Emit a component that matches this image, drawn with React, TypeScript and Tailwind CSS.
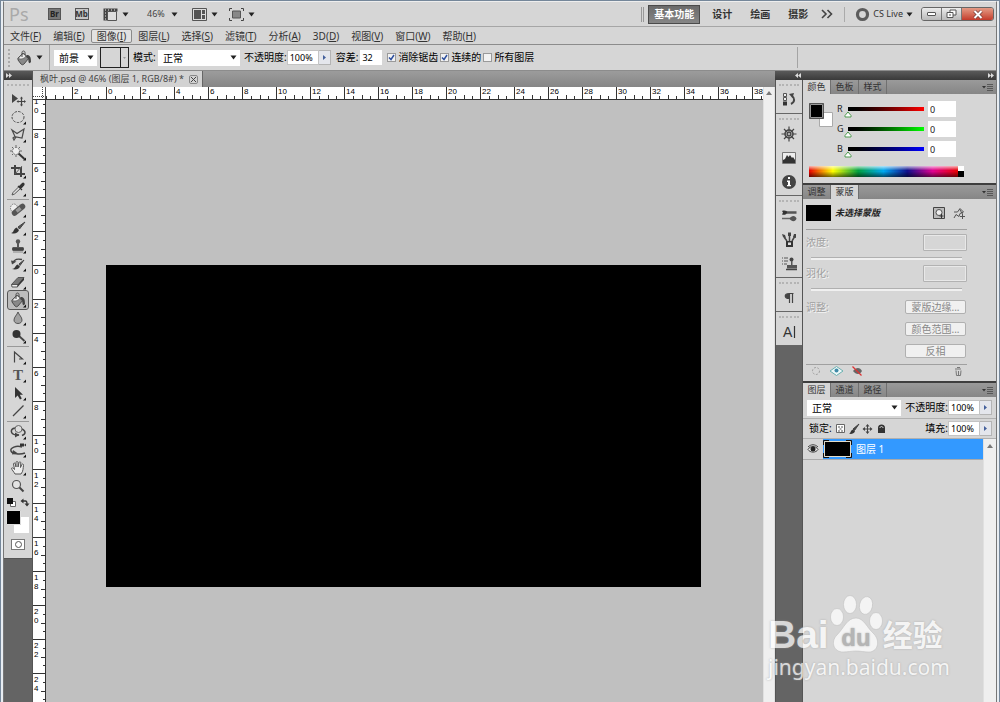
import { useState } from "react";
import type { ReactNode } from "react";

const INK = "#4a4a4a";

function Caret() {
  return (
    <svg width="7" height="5" viewBox="0 0 7 5" className="shrink-0">
      <path d="M0.5 0.5h6L3.5 4.5z" fill="#222" />
    </svg>
  );
}

function Grip() {
  return <div className="mx-[3px] mt-[4px] mb-[3px] h-[2px] shrink-0 border-t-2 border-dotted border-[#b4b4b4]" />;
}

/* ---------- application bar ---------- */

function AppIcon({ children, label }: { children: ReactNode; label: string }) {
  return (
    <button aria-label={label} className="flex items-center gap-[4px]">
      <svg width="15" height="13" viewBox="0 0 15 13">
        {children}
      </svg>
      <Caret />
    </button>
  );
}

const WORKSPACES = ["设计", "绘画", "摄影"];

function AppBar() {
  return (
    <header className="flex h-[25px] shrink-0 items-center border-b border-[#a6a6a6] pl-[5px]">
      <span className="w-[39px] text-[18px] leading-[20px] text-[#a9a9a9]">Ps</span>
      <button className="mr-[14px] h-[12px] w-[13px] border border-[#555] bg-[#777] text-center text-[8px] leading-[10px] font-bold text-[#222]">
        Br
      </button>
      <button className="mr-[14px] h-[12px] w-[14px] border border-[#555] bg-[#c4c4c4] text-center text-[8px] leading-[10px] font-bold text-[#333]">
        <span className="-ml-px">Mb</span>
      </button>
      <AppIcon label="查看额外内容">
        <path d="M0.5 0.5h14v3h-10v9h-4z" fill="#444" />
        <path d="M4.5 3.5h9v9h-9z" fill="#ddd" stroke="#555" />
        <path d="M2 2h1M5 2h1M8 2h1M11 2h1M2 5h1M2 8h1M2 11h1" stroke="#eee" />
      </AppIcon>
      <button className="ml-[18px] flex w-[31px] items-center justify-between text-[9px] text-[#444]">
        46% <Caret />
      </button>
      <div className="ml-[14px] flex gap-[11px]">
        <AppIcon label="排列文档">
          <path d="M0.5 0.5h14v12h-14z" fill="#ddd" stroke="#555" />
          <path d="M2 2h7v9H2zM10 2h3v4h-3zM10 7h3v4h-3z" fill="#555" />
        </AppIcon>
        <AppIcon label="屏幕模式">
          <path d="M3.500 3h8v7h-8z" fill="#888" stroke="#555" />
          <path d="M0.5 3V0.5H3M12 0.5h2.5V3M14.5 10v2.5H12M3 12.5H0.5V10" fill="none" stroke="#444" />
        </AppIcon>
      </div>
      <div className="flex-1" />
      <div className="mr-[4px] h-[15px] w-[3px] border-x border-[#999]" />
      <button className="h-[19px] w-[52px] border border-[#4a4a4a] bg-linear-to-b from-[#6a6a6a] to-[#868686] text-center text-[10px] leading-[17px] font-bold text-white">
        基本功能
      </button>
      <nav className="ml-[12px] flex gap-[18px]">
        {WORKSPACES.map((w) => (
          <button key={w} className="text-[10px] font-bold text-[#333]">
            {w}
          </button>
        ))}
      </nav>
      <button aria-label="更多工作区" className="ml-[13px]">
        <svg width="12" height="10" viewBox="0 0 12 10">
          <path d="M1 1l4 4-4 4M6.500 1l4 4-4 4" fill="none" stroke="#444" strokeWidth="1.600" />
        </svg>
      </button>
      <div className="ml-[11px] h-[15px] w-px bg-[#aaa]" />
      <button className="ml-[10px] flex items-center gap-[3px] text-[9px] text-[#333]">
        <svg width="15" height="15" viewBox="0 0 15 15">
          <circle cx="7.500" cy="7.500" r="5" fill="none" stroke="#5c5c5c" strokeWidth="3.200" />
        </svg>
        <span>CS Live</span>
        <Caret />
      </button>
      <div className="mr-[2px] ml-[8px] flex h-[14px] w-[73px] overflow-hidden rounded-[3px] border border-[#666] bg-[#d4d4d4]">
        <button aria-label="最小化" className="flex w-[20px] items-center justify-center border-r border-[#777] bg-linear-to-b from-[#ececec] to-[#b9b9b9]">
          <span className="h-[4px] w-[9px] rounded-[1px] border border-[#555] bg-white" />
        </button>
        <button aria-label="还原" className="flex w-[20px] items-center justify-center border-r border-[#777] bg-linear-to-b from-[#ececec] to-[#b9b9b9]">
          <svg width="11" height="10" viewBox="0 0 11 10">
            <path d="M4 1h6v5H4z" fill="#fff" stroke="#555" />
            <path d="M1 3.500h6v5H1z" fill="#fff" stroke="#555" />
            <path d="M3 5.500h2v1H3z" fill="#555" />
          </svg>
        </button>
        <button aria-label="关闭" className="flex flex-1 items-center justify-center bg-linear-to-b from-[#e39a85] to-[#c3392a]">
          <svg width="10" height="9" viewBox="0 0 10 9">
            <path d="M1.500 1l7 7M8.500 1l-7 7" stroke="#6d3a34" strokeWidth="3.400" />
            <path d="M1.500 1l7 7M8.500 1l-7 7" stroke="#fff" strokeWidth="2" />
          </svg>
        </button>
      </div>
    </header>
  );
}

const MENUS = [
  ["文件", "F"],
  ["编辑", "E"],
  ["图像", "I"],
  ["图层", "L"],
  ["选择", "S"],
  ["滤镜", "T"],
  ["分析", "A"],
  ["3D", "D"],
  ["视图", "V"],
  ["窗口", "W"],
  ["帮助", "H"],
];

function MenuBar() {
  return (
    <nav className="flex h-[18px] shrink-0 items-center border-b border-[#8c8c8c]">
      {MENUS.map(([name, key]) => (
        <button
          key={name}
          className={`h-[14px] rounded-[2px] border px-[5px] text-[10px] leading-[12px] text-[#333] ${
            name === "图像" ? "border-[#8a8a8a] bg-[#e2e2e2]" : "border-transparent"
          }`}
        >
          {name}(<u>{key}</u>)
        </button>
      ))}
    </nav>
  );
}

/* ---------- options bar ---------- */

function Select({ value, label, className }: { value: string; label: string; className: string }) {
  return (
    <div className={`relative ${className}`}>
      <select
        aria-label={label}
        className="block h-full w-full appearance-none bg-white pl-[5px] text-[10px] leading-[16px] text-black outline-none"
      >
        <option>{value}</option>
      </select>
      <div className="pointer-events-none absolute inset-y-0 right-[3px] flex items-center">
        <Caret />
      </div>
    </div>
  );
}

function Percent({ label, id }: { label: string; id: string }) {
  return (
    <div className="flex items-center">
      <label htmlFor={id} className="text-[10px] text-black">
        {label}
      </label>
      <input id={id} defaultValue="100%" className="h-[15px] w-[32px] border border-[#c4c4c4] bg-white pl-[2px] text-[9px] text-black" />
      <button aria-label={`${label}滑块`} className="flex h-[15px] w-[12px] items-center justify-center border border-l-0 border-[#b4b4b4] bg-[#e4e6ec]">
        <svg width="3" height="5" viewBox="0 0 3 5">
          <path d="M0 0l3 2.500L0 5z" fill="#44609c" />
        </svg>
      </button>
    </div>
  );
}

function Check({ label, initial }: { label: string; initial: boolean }) {
  const [on, setOn] = useState(initial);
  return (
    <label className="flex items-center gap-[2px] text-[10px] text-black">
      <span className="grid">
        <input
          type="checkbox"
          checked={on}
          onChange={() => setOn(!on)}
          className="col-start-1 row-start-1 h-[9px] w-[9px] appearance-none border border-[#9a9a9a] bg-[#f2f2f2]"
        />
        {on && (
          <svg width="9" height="9" viewBox="0 0 9 9" className="pointer-events-none col-start-1 row-start-1">
            <path d="M2 4.500l2 2L7 2" fill="none" stroke="#2d4f9e" strokeWidth="1.500" />
          </svg>
        )}
      </span>
      {label}
    </label>
  );
}

function BucketShape() {
  return (
    <>
      <path d="M4 9l5-5 6 5-5 6c-1 1-2 1-3 0L4 11z" fill="#888" stroke={INK} />
      <path d="M4 9.500l5-5 3 2.500c-2 3-5 3.500-8 2.500z" fill="#eee" stroke={INK} strokeWidth="0.600" />
      <path d="M8 8V3.500c0-2 3-2 3 0V6" fill="none" stroke={INK} />
      <path d="M13 6c3 0 4 2 4 7-1 1.500-2 1.500-2.500 0 0-2 0-4-2.500-5z" fill="#444" />
    </>
  );
}

function OptionsBar() {
  return (
    <div className="flex h-[26px] shrink-0 items-center border-b border-[#8c8c8c] pl-[4px]">
      <div className="h-[18px] w-[3px] border-l-2 border-dotted border-[#aaa]" />
      <button aria-label="油漆桶" className="ml-[3px] flex h-full w-[36px] items-center justify-between border-r border-[#a4a4a4] pr-[6px]">
        <svg width="20" height="18" viewBox="0 0 20 18">
          <BucketShape />
        </svg>
        <Caret />
      </button>
      <Select label="填充源" value="前景" className="ml-[4px] h-[16px] w-[43px]" />
      <button aria-label="图案" className="ml-[3px] flex h-[21px] w-[29px] border border-[#222]">
        <span className="h-full w-[20px] border-r border-[#222]" />
        <span className="flex h-full flex-1 items-center justify-center">
          <svg width="3" height="2" viewBox="0 0 3 2">
            <path d="M0 0h3L1.500 2z" fill="#999" />
          </svg>
        </span>
      </button>
      <span className="ml-[4px] w-[25px] text-[10px] text-black">模式:</span>
      <Select label="模式" value="正常" className="mr-[4px] h-[16px] w-[82px]" />
      <Percent label="不透明度:" id="tool-opacity" />
      <label htmlFor="tolerance" className="mr-[2px] ml-[5px] text-[10px] text-black">
        容差:
      </label>
      <input id="tolerance" defaultValue="32" className="mr-[5px] h-[15px] w-[22px] bg-white pl-[2px] text-[9px] text-black" />
      <div className="flex gap-[2px]">
        <Check label="消除锯齿" initial />
        <Check label="连续的" initial />
        <Check label="所有图层" initial={false} />
      </div>
      <div className="mr-[198px] ml-auto h-[21px] w-px bg-[#a4a4a4]" />
    </div>
  );
}

/* ---------- toolbox ---------- */

type Tool = { name: string; icon: ReactNode; plain?: boolean };

const TOOL_GROUPS: Tool[][] = [
  [
    {
      name: "移动",
      plain: true,
      icon: (
        <>
          <path d="M4 4v9l6-4.500z" fill="#444" />
          <path d="M13.500 8v7M10 11.500h7" stroke="#444" strokeWidth="1.200" />
          <path d="M13.500 6.500l1.500 2h-3zM13.500 16.500l1.500-2h-3zM8.500 11.500l2-1.500v3zM18 11.500l-2-1.500v3z" fill="#444" />
        </>
      ),
    },
    { name: "椭圆选框", icon: <ellipse cx="10" cy="9" rx="6" ry="5.500" fill="none" stroke={INK} strokeDasharray="2.500 1.300" /> },
    { name: "多边形套索", icon: <path d="M4 4l5 3.500L16 3l-2 9-6-1-2 3-1-2 2-1.500z" fill="none" stroke={INK} strokeWidth="1.200" /> },
    {
      name: "魔棒",
      icon: (
        <>
          <circle cx="8" cy="7" r="3.500" fill="#eee" stroke="#666" strokeDasharray="2 1" />
          <path d="M8 1v2M8 11v2M2 7h2M12 7h2M4 3l1 1M4 11l1-1M11 4l1-1" stroke="#666" />
          <path d="M10.500 9.500l6 5.500" stroke="#333" strokeWidth="2" />
        </>
      ),
    },
    {
      name: "裁剪",
      icon: (
        <>
          <path d="M7 3v9h10M3 6h10v9" fill="none" stroke="#444" strokeWidth="2" />
          <path d="M7.500 11.500L14 4" stroke="#666" />
        </>
      ),
    },
    {
      name: "吸管",
      icon: (
        <>
          <path d="M4 15l1-2.500 6-6L13 8l-6.500 6z" fill="#ddd" stroke="#555" />
          <path d="M10 6l4 4M11.500 6.500l3-3c.7-.7 2 .3 1.300 1.300L13 8z" fill="#333" stroke="#333" strokeWidth="1.300" />
        </>
      ),
    },
  ],
  [
    {
      name: "污点修复",
      icon: (
        <>
          <ellipse cx="6" cy="7" rx="3.500" ry="4" fill="#eee" stroke="#777" strokeDasharray="1.500 1" />
          <path d="M6.500 12L14.500 5.500" stroke="#555" strokeWidth="5.500" strokeLinecap="round" />
          <path d="M8.500 10.300l4-3.200" stroke="#999" strokeWidth="3.500" />
        </>
      ),
    },
    {
      name: "画笔",
      icon: (
        <>
          <path d="M17 3l-7 5 1.500 2z" fill="#555" stroke="#444" />
          <path d="M3 14c3 0 2-4 5.500-5.500L11 11c-1 3-4 4.500-8 3z" fill="#333" />
        </>
      ),
    },
    {
      name: "仿制图章",
      icon: (
        <>
          <circle cx="10" cy="4.500" r="2.200" fill="#555" />
          <path d="M9 6h2v4h4.500v4h-11v-4H9z" fill="#555" />
          <path d="M4 12h12" stroke="#3c3c3c" strokeWidth="1.500" />
          <path d="M5 15h10" stroke="#888" />
        </>
      ),
    },
    {
      name: "历史记录画笔",
      icon: (
        <>
          <path d="M16 5l-5 4 1 1.500z" fill="#555" stroke="#444" />
          <path d="M4 14c3 0 3-3 5.500-4.500L12 11.500c-1 2.500-4 3.500-8 2.500z" fill="#333" />
          <path d="M5 8c1-4 5-4.500 9-3.500" fill="none" stroke="#444" strokeWidth="1.300" />
          <path d="M3 5.500l5.500 1L4 9.500z" fill="#444" />
        </>
      ),
    },
    {
      name: "橡皮擦",
      icon: (
        <>
          <path d="M3.500 11.500L10 4.500h6l-6 7z" fill="#777" stroke="#555" />
          <path d="M3.500 11.500H10L9.500 14H4z" fill="#eee" stroke="#555" />
          <path d="M10 11.500l6-7v2.500L9.500 14z" fill="#333" />
        </>
      ),
    },
    { name: "油漆桶", icon: <BucketShape /> },
    { name: "模糊", icon: <path d="M10 3c1 3 4 5 4 8 0 2-1.500 3.500-4 3.500S6 13 6 11c0-3 3-5 4-8z" fill="#a2a2a2" stroke="#555" /> },
    {
      name: "减淡",
      icon: (
        <>
          <path d="M11 9l5.500 5" stroke="#444" strokeWidth="1.800" />
          <circle cx="8.500" cy="7" r="4" fill="#333" />
        </>
      ),
    },
  ],
  [
    { name: "钢笔", icon: <path d="M6.500 14.500V4l8 7H11" fill="none" stroke="#444" strokeWidth="1.200" /> },
    {
      name: "文字",
      icon: (
        <text x="10" y="14" textAnchor="middle" fontSize="15" fontFamily="Liberation Serif, serif" fontWeight="bold" fill="#555">
          T
        </text>
      ),
    },
    { name: "路径选择", icon: <path d="M7 3v11l2.700-2.600L12 15.500l1.800-1-2-3.800H15z" fill="#333" /> },
    { name: "直线", icon: <path d="M5 14L15.500 3.500" stroke="#444" strokeWidth="1.200" /> },
  ],
  [
    {
      name: "3D旋转",
      icon: (
        <>
          <path d="M7 5C2 6 2 11 8 12h3M14 6c4 2 4 5 0 6.500" fill="none" stroke="#444" strokeWidth="1.500" />
          <circle cx="10.500" cy="6" r="3.500" fill="#ddd" stroke="#666" />
          <path d="M7 9.500l4.500 2.500L7 14.500z" fill="#444" />
        </>
      ),
    },
    {
      name: "3D环绕",
      icon: (
        <>
          <path d="M12 2.500h4v3h-4zM16 4l2-1.500v3z" fill="#333" />
          <path d="M14 6C8 4 2 7 3 10s9 4 14 2" fill="none" stroke="#444" strokeWidth="1.500" />
          <path d="M5 9l5 3.500-6 1z" fill="#444" />
        </>
      ),
    },
    {
      name: "抓手",
      icon: (
        <path
          d="M7 15C6 13 4 11 3.500 9.500c0-1 1.500-1 3 1L5.500 5c0-1.300 1.500-1.300 1.800 0L8 8V3.500c0-1.300 2-1.300 2 0V8l1-4.500c.3-1 1.800-1 1.800.3L12.500 8.500l1.300-3c.6-1 2-.5 1.700.8C15 9 15.500 12 13 15z"
          fill="#eee"
          stroke="#555"
        />
      ),
    },
    {
      name: "缩放",
      plain: true,
      icon: (
        <>
          <circle cx="8.500" cy="7.500" r="4" fill="#e4e4e4" stroke="#555" strokeWidth="1.200" />
          <path d="M11.500 10.500l4 4" stroke="#444" strokeWidth="2" />
        </>
      ),
    },
  ],
];

function Toolbox() {
  const [active, setActive] = useState("油漆桶");
  return (
    <aside className="flex w-[29px] shrink-0 flex-col border-r border-[#555] bg-[#646464]">
      <DarkBar>
        <Chevrons />
      </DarkBar>
      <div className="flex flex-col items-center border-b border-[#555] bg-[#d6d6d6] pb-[8px]">
        <div className="w-full pb-px">
          <Grip />
        </div>
        {TOOL_GROUPS.map((group, i) => (
          <div key={i} className={`flex w-[22px] flex-col items-center ${i > 0 ? "mt-px border-t border-[#999] pt-px" : ""}`}>
            {group.map((tool) => (
              <button
                key={tool.name}
                aria-label={tool.name}
                onClick={() => setActive(tool.name)}
                className={`h-[18px] w-[20px] ${active === tool.name ? "rounded-[2px] bg-[#bcbcbc] outline outline-[#555]" : ""}`}
              >
                <svg width="20" height="18" viewBox="0 0 20 18">
                  {tool.icon}
                  {!tool.plain && <path d="M18 13.500v3h-3z" fill="#111" />}
                </svg>
              </button>
            ))}
          </div>
        ))}
        <svg width="24" height="40" viewBox="0 0 24 40">
          <path d="M4.500 6.500h5v5h-5z" fill="#fff" stroke="#666" />
          <path d="M1 3h6v6H1z" fill="#111" />
          <path d="M16 6h3.500c1.500 0 1.500 1 1.500 3" fill="none" stroke="#333" strokeWidth="1.300" />
          <path d="M17.500 3.500v5l-3-2.500zM18.500 8.500h5l-2.500 3z" fill="#333" />
          <path d="M8 22h15v16H8z" fill="#fff" />
          <path d="M0.500 15.500h14v14h-14z" fill="#000" stroke="#ddd" />
        </svg>
        <button aria-label="快速蒙版" className="mt-[4px] flex h-[11px] w-[14px] items-center justify-center border border-[#777] bg-white">
          <span className="h-[7px] w-[7px] rounded-full border border-[#555]" />
        </button>
      </div>
    </aside>
  );
}

/* ---------- document window ---------- */

const H_MARKS = Array.from({ length: 21 }, (_, i) => Math.abs(i * 2 - 2));
const V_MARKS = Array.from({ length: 17 }, (_, i) => Math.abs(i * 2 - 8));

function HTicks() {
  return (
    <svg width="34" height="4" viewBox="0 0 34 4" className="-mt-px shrink-0">
      <path d="M8.500 1v3M17.500 0v4M25.500 1v3" stroke="#333" />
    </svg>
  );
}

function VTicks() {
  return (
    <svg width="4" height="34" viewBox="0 0 4 34" className="shrink-0">
      <path d="M2 8.500h2M0 17.500h4M2 25.500h2" stroke="#333" />
    </svg>
  );
}

function VCell({ mark }: { mark: number }) {
  return (
    <div className="flex h-[34px] w-full shrink-0 justify-between border-t border-[#333]">
      <div className="pt-px pl-px text-[8px] leading-[9px] text-black">
        {String(mark)
          .split("")
          .map((d, i) => (
            <div key={i}>{d}</div>
          ))}
      </div>
      <VTicks />
    </div>
  );
}

function Document() {
  return (
    <main className="flex min-w-0 flex-1 flex-col">
      <div className="flex h-[16px] shrink-0 bg-linear-to-b from-[#9c9c9c] to-[#868686]">
        <div className="flex items-center gap-[5px] border-r border-[#666] bg-[#d2d2d2] pr-[4px] pl-[7px] text-[9px] text-[#444]">
          <span className="whitespace-nowrap">枫叶.psd @ 46% (图层 1, RGB/8#) *</span>
          <button aria-label="关闭文档" className="flex h-[9px] w-[9px] items-center justify-center rounded-[2px] border border-[#888]">
            <svg width="5" height="5" viewBox="0 0 5 5">
              <path d="M0 0l5 5M5 0L0 5" stroke="#444" />
            </svg>
          </button>
        </div>
      </div>
      <div className="flex min-h-0 flex-1">
        <div className="flex min-w-0 flex-1 flex-col font-['Liberation_Sans',sans-serif]">
          <div className="flex h-[13px] shrink-0 overflow-hidden border-b border-[#333] bg-white">
            <div className="flex w-[13px] shrink-0 border-r border-[#555]">
              <svg width="12" height="12" viewBox="0 0 12 12">
                <path d="M9.500 0v12M0 9.500h12" stroke="#444" strokeDasharray="1 1" />
              </svg>
            </div>
            <div className="flex w-[26px] shrink-0 items-end justify-end overflow-hidden">
              <HTicks />
            </div>
            {H_MARKS.map((mark, i) => (
              <div key={i} className="flex w-[34px] shrink-0 flex-col justify-between border-l border-[#333]">
                <span className="pl-px text-[8px] leading-[9px] text-black">{mark}</span>
                <HTicks />
              </div>
            ))}
          </div>
          <div className="flex min-h-0 flex-1">
            <div className="flex w-[13px] shrink-0 flex-col overflow-hidden border-r border-[#333] bg-white">
              <div className="flex h-[29px] shrink-0 flex-col justify-end overflow-hidden">
                <VCell mark={10} />
              </div>
              {V_MARKS.map((mark, i) => (
                <VCell key={i} mark={mark} />
              ))}
            </div>
            <div className="flex flex-1 justify-center overflow-hidden bg-[#c0c0c0] pt-[165px] pr-[2px]">
              <div className="h-[322px] w-[595px] shrink-0 bg-black" />
            </div>
          </div>
        </div>
        <div className="flex w-[12px] shrink-0 justify-center border-x border-[#e0e0e0] bg-[#efefef] pt-[4px]">
          <svg width="6" height="4" viewBox="0 0 6 4">
            <path d="M0 4l3-4 3 4z" fill="#777" />
          </svg>
        </div>
      </div>
    </main>
  );
}

/* ---------- dock ---------- */

function Chevrons({ left }: { left?: boolean }) {
  return (
    <svg width="6" height="5" viewBox="0 0 6 5">
      <path d={left ? "M3 0v5L0 2.500zM6 0v5L3 2.500z" : "M0 0v5l3-2.500zM3 0v5l3-2.500z"} fill="#ddd" />
    </svg>
  );
}

function DarkBar({ children }: { children: ReactNode }) {
  return (
    <div className="flex h-[9px] shrink-0 items-center justify-between bg-linear-to-b from-[#5a5a5a] to-[#3a3a3a] px-[2px]">{children}</div>
  );
}

const DOCK_GROUPS: Tool[][] = [
  [
    {
      name: "历史记录",
      icon: (
        <>
          <path d="M3.500 2.500h3v3h-3zM3.500 6.500h3v3h-3z" fill="#eee" stroke="#555" />
          <path d="M3 10.500h4v4H3z" fill="#333" />
          <path d="M11 13c4-2 4-6 1-8" fill="none" stroke="#444" strokeWidth="2" />
          <path d="M9 3l5-1-1.500 5z" fill="#444" />
        </>
      ),
    },
  ],
  [
    {
      name: "导航器",
      icon: (
        <>
          <circle cx="9" cy="9" r="4" fill="none" stroke="#444" strokeWidth="1.500" />
          <path d="M9 1.500v15M1.500 9h15M4 4l10 10M14 4L4 14" stroke="#444" strokeWidth="1.200" />
          <circle cx="9" cy="9" r="1.500" fill="#ddd" stroke="#444" />
        </>
      ),
    },
    {
      name: "直方图",
      icon: (
        <>
          <path d="M2.500 3.500h13v11h-13z" fill="#eee" stroke="#777" />
          <path d="M3 14v-3l2-1 2-4 1.500 2L10 6l2 3 1-1 2 3v3z" fill="#333" />
        </>
      ),
    },
    {
      name: "信息",
      icon: (
        <>
          <circle cx="9" cy="9" r="7" fill="#444" />
          <path d="M8 4h2v2H8zM7 7.500h3V13H8V9H7zM7 12h4v1.300H7z" fill="#fff" />
        </>
      ),
    },
  ],
  [
    {
      name: "画笔预设",
      icon: (
        <>
          <path d="M2 4c3-1 5 0 6 1.500C6 8 4 8 2 7.500l1-2z" fill="#333" />
          <path d="M7 5.500h9.500" stroke="#555" strokeWidth="2.500" />
          <path d="M2 11.500h9" stroke="#666" strokeWidth="1.500" />
          <path d="M9.500 11.500c2-3.500 6-3.500 7 0-1 3.500-5 3.500-7 0z" fill="#555" />
        </>
      ),
    },
    {
      name: "画笔",
      icon: (
        <>
          <path d="M6 10h7v6H6z" fill="#333" />
          <path d="M8 11.500h3v2.500H8z" fill="#ddd" />
          <path d="M7 10L4 6M9.500 10V4M12 10l3-5" stroke="#444" strokeWidth="1.500" />
          <path d="M2 3l3 1 1 3-3-1zM8 1.500h3V5H8zM14 3h2v4l-3-1z" fill="#444" />
        </>
      ),
    },
    {
      name: "仿制源",
      icon: (
        <>
          <path d="M2 3h1M2 6h1M2 9h1M4 3h4M4 6h4M4 9h3" stroke="#555" />
          <circle cx="11.500" cy="4.500" r="2" fill="#444" />
          <path d="M11 6h1.500v4H17v3.500H7V10h4z" fill="#555" />
          <path d="M6 14.500h11" stroke="#444" strokeWidth="1.500" />
        </>
      ),
    },
  ],
  [
    {
      name: "段落",
      icon: <path d="M8.500 4.500h5M9.500 4v10M12.500 4v10M9 4.500C4 4.500 4 9.500 9 9.500z" fill="#444" stroke="#444" strokeWidth="1.200" />,
    },
  ],
  [
    {
      name: "字符",
      icon: (
        <>
          <text x="3" y="14" fontSize="14" fontFamily="Liberation Sans, sans-serif" fill="#333">
            A
          </text>
          <path d="M14.500 3v12" stroke="#333" strokeWidth="1.200" />
        </>
      ),
    },
  ],
];

function IconDock() {
  return (
    <div className="w-[28px] shrink-0 border-x border-[#555] bg-[#646464]">
      {DOCK_GROUPS.map((group, i) => (
        <div key={i} className="flex flex-col border-b border-[#666] bg-[#d6d6d6]">
          <Grip />
          {group.map((item) => (
            <button key={item.name} aria-label={item.name} className="flex h-[24px] items-start justify-center pt-[2px]">
              <svg width="18" height="18" viewBox="0 0 18 18">
                {item.icon}
              </svg>
            </button>
          ))}
        </div>
      ))}
    </div>
  );
}

function Tabs({ names, active }: { names: string[]; active: string }) {
  return (
    <div className="flex h-[14px] shrink-0 bg-linear-to-b from-[#9a9a9a] to-[#868686]">
      {names.map((name) => (
        <button
          key={name}
          className={`w-[28px] border-r border-[#707070] text-center text-[9px] leading-[14px] text-[#333] ${
            name === active ? "bg-[#d6d6d6]" : ""
          }`}
        >
          {name}
        </button>
      ))}
      <button aria-label="面板菜单" className="mr-[3px] ml-auto">
        <svg width="11" height="7" viewBox="0 0 11 7">
          <path d="M0 2h4L2 4.500z" fill="#333" />
          <path d="M5 0.500h6M5 2.500h6M5 4.500h6M5 6.500h6" stroke="#4a4a4a" strokeWidth="0.800" />
        </svg>
      </button>
    </div>
  );
}

const CHANNELS = [
  { name: "R", track: "bg-linear-to-r from-black to-[#f00]" },
  { name: "G", track: "bg-linear-to-r from-black to-[#0f0]" },
  { name: "B", track: "bg-linear-to-r from-black to-[#00f]" },
];

function ColorPanel() {
  return (
    <section className="shrink-0 border-b-2 border-[#3e3e3e]">
      <Tabs names={["颜色", "色板", "样式"]} active="颜色" />
      <div className="flex h-[89px] flex-col px-[6px] pt-[7px]">
        <div className="flex">
          <svg width="25" height="24" viewBox="0 0 25 24" className="mt-[2px] mr-[3px]">
            <path d="M10.500 9.500h13v14h-13z" fill="#fff" stroke="#aaa" />
            <path d="M0.500 0.500h14v15h-14z" fill="#000" stroke="#555" />
            <path d="M1.500 1.500h12v13h-12z" fill="none" stroke="#999" />
          </svg>
          <div className="flex flex-col gap-[4px]">
            {CHANNELS.map((c) => (
              <div key={c.name} className="flex h-[16px] items-center">
                <label htmlFor={`ch-${c.name}`} className="w-[11px] text-[9px] text-[#222]">
                  {c.name}
                </label>
                <div className="w-[76px] pt-[6px]">
                  <div className={`h-[4px] w-full ${c.track}`} />
                  <svg width="8" height="7" viewBox="0 0 8 7" className="-ml-[4px]">
                    <path d="M4 1l3 3.500V6H1V4.500z" fill="#fff" stroke="#4f9a4f" />
                  </svg>
                </div>
                <input id={`ch-${c.name}`} defaultValue="0" className="ml-[4px] h-[16px] w-[28px] bg-white pl-[2px] text-[9px] text-[#222]" />
              </div>
            ))}
          </div>
        </div>
        <div className="mt-[9px] flex h-[11px] w-[155px]">
          <div className="flex-1 bg-[linear-gradient(to_bottom,rgba(255,255,255,0.700),transparent_40%,transparent_50%,rgba(0,0,0,0.550)),linear-gradient(to_right,#e80000,#ff0_16%,#00a040_33%,#00a8f0_50%,#10108c_66%,#e00090_83%,#e80000)]" />
          <div className="w-[6px] border-b-[6px] border-black bg-white" />
        </div>
      </div>
    </section>
  );
}

function MaskField({ label, id }: { label: string; id: string }) {
  return (
    <div className="h-[31px]">
      <div className="flex items-center justify-between">
        <label htmlFor={id} className="text-[10px] text-[#a0a0a0] [text-shadow:1px_1px_0_#f4f4f4]">
          {label}
        </label>
        <input id={id} disabled className="h-[17px] w-[44px] rounded-[1px] border border-[#b2b2b2] bg-[#d6d6d6] shadow-[inset_0_0_0_1px_#e8e8e8]" />
      </div>
      <div className="mx-[5px] mt-[6px] h-[3px] border-t border-[#b0b0b0] bg-[#f0f0f0]" />
    </div>
  );
}

const MASK_ACTIONS = ["蒙版边缘...", "颜色范围...", "反相"];

function MaskPanel() {
  return (
    <section className="shrink-0 border-b-2 border-[#3e3e3e]">
      <Tabs names={["调整", "蒙版"]} active="蒙版" />
      <div className="h-[182px] w-[164px] pt-[6px] pl-[3px]">
        <div className="flex h-[25px] items-start border-b border-[#a0a0a0]">
          <div className="h-[16px] w-[25px] bg-black" />
          <span className="ml-[4px] text-[9px] leading-[16px] font-bold text-[#222] italic">未选择蒙版</span>
          <button aria-label="添加像素蒙版" className="mt-[2px] ml-auto">
            <svg width="12" height="12" viewBox="0 0 12 12">
              <path d="M0.500 0.500h11v11H0.500z" fill="#bbb" stroke="#444" />
              <circle cx="6" cy="5.500" r="3" fill="#eee" stroke="#555" />
              <path d="M6.500 9h4M8.500 7v4" stroke="#333" />
            </svg>
          </button>
          <button aria-label="添加矢量蒙版" className="mt-[2px] mr-[2px] ml-[8px]">
            <svg width="12" height="12" viewBox="0 0 12 12">
              <path d="M1 5h3.500L7 1.500 10.500 5 7 6.500l-1 3-3-2-2 3.500M6.500 2l3 5M7 9.500h5M9.500 7v5" fill="none" stroke="#555" />
            </svg>
          </button>
        </div>
        <div className="mt-[4px]">
          <MaskField label="浓度:" id="density" />
          <MaskField label="羽化:" id="feather" />
        </div>
        <div className="mt-[4px] flex items-start justify-between">
          <span className="text-[10px] leading-[14px] text-[#a0a0a0] [text-shadow:1px_1px_0_#f4f4f4]">调整:</span>
          <div className="mr-px flex flex-col gap-[8px]">
            {MASK_ACTIONS.map((a) => (
              <button key={a} disabled className="h-[14px] w-[61px] rounded-[2px] border border-[#b0b0b0] bg-[#f0f0f0] text-center text-[10px] leading-[12px] text-[#888]">
                {a}
              </button>
            ))}
          </div>
        </div>
        <div className="mt-[6px] flex items-center border-t border-[#a0a0a0] px-[4px]">
          <svg width="60" height="12" viewBox="0 0 60 12">
            <circle cx="6" cy="6" r="3.500" fill="none" stroke="#a0a0a0" strokeDasharray="2 1.500" />
            <path d="M20 6l6.500-4.500L33 6l-6.500 4.500z" fill="#eef8f8" stroke="#6ab0b0" />
            <circle cx="26.500" cy="5.500" r="2" fill="#3f8aa8" />
            <path d="M43 6c3-4 7-4 9 0-2 4-6 4-9 0z" fill="#666" />
            <path d="M42.500 1.500l9 9" stroke="#d33" strokeWidth="1.300" />
          </svg>
          <svg width="9" height="11" viewBox="0 0 9 11" className="ml-auto">
            <path d="M1 3h6M3 1.500h3M2 4.500l.5 5h4l.5-5M4.500 5v4" fill="none" stroke="#777" />
          </svg>
        </div>
      </div>
    </section>
  );
}

function LayersPanel() {
  return (
    <section className="flex min-h-0 flex-1 flex-col">
      <Tabs names={["图层", "通道", "路径"]} active="图层" />
      <div className="flex h-[22px] shrink-0 items-center justify-between border-b border-[#b0b0b0] px-[4px]">
        <Select label="混合模式" value="正常" className="h-[16px] w-[94px]" />
        <Percent label="不透明度:" id="layer-opacity" />
      </div>
      <div className="flex h-[20px] shrink-0 items-center border-b border-[#b0b0b0] pr-[4px] pl-[6px]">
        <span className="mr-[3px] text-[10px] text-black">锁定:</span>
        <svg width="56" height="12" viewBox="0 0 56 12">
          <path d="M1.500 1.500h8v8h-8z" fill="#fff" stroke="#666" />
          <path d="M3 3h2v2H3zM6 3h2v2H6zM4.500 5h2v2h-2zM3 7h2v2H3zM6 7h2v2H6z" fill="#aaa" />
          <path d="M24 1l-6 5 1.500 1.500z" fill="#444" stroke="#444" />
          <path d="M14 10.500c2 0 1-3 4-4l2 2c-1 2-4 3-6 2z" fill="#333" />
          <path d="M32.500 2v8M28.500 6h8" stroke="#444" />
          <path d="M32.500 1l2 2.500h-4zM32.500 11l2-2.500h-4zM27.500 6L30 4v4zM37.500 6L35 4v4z" fill="#444" />
          <path d="M43 5.500V4.500c0-4 7-4 7 0V10h-7z" fill="#333" />
          <path d="M45 5c0-2 3-2 3 0" fill="none" stroke="#ddd" />
        </svg>
        <div className="ml-auto">
          <Percent label="填充:" id="layer-fill" />
        </div>
      </div>
      <div className="flex min-h-0 flex-1">
        <div className="flex-1">
          <div className="flex h-[21px] items-center border-b border-[#aaa]">
            <button aria-label="可见性" className="flex w-[20px] justify-center">
              <svg width="12" height="10" viewBox="0 0 12 10">
                <path d="M1 5.500c2-4 8-4 10 0-2 3.500-8 3.500-10 0z" fill="#eee" stroke="#444" />
                <circle cx="6" cy="5" r="2.500" fill="#222" />
                <path d="M1 3c3-3 7-3 10 0" fill="none" stroke="#444" />
              </svg>
            </button>
            <div className="flex h-full flex-1 items-center bg-[#3399ff]">
              <svg width="29" height="18" viewBox="0 0 29 18">
                <path d="M1.500 1.500h26v15h-26z" fill="#000" stroke="#e4dcc8" />
                <path d="M0.500 5V0.500H6M23 0.500h5.500V5M28.500 13v4.500H23M6 17.500H0.500V13" fill="none" stroke="#111" />
              </svg>
              <span className="ml-[4px] text-[10px] text-white">图层 1</span>
            </div>
          </div>
        </div>
        <div className="flex w-[13px] shrink-0 justify-center border-l border-[#e0e0e0] bg-[#efefef] pt-[5px]">
          <svg width="6" height="4" viewBox="0 0 6 4">
            <path d="M0 4l3-4 3 4z" fill="#777" />
          </svg>
        </div>
      </div>
    </section>
  );
}

function Watermark() {
  return (
    <div className="pointer-events-none absolute right-[52px] bottom-[21px] w-[176px] text-white opacity-75 [text-shadow:0_0_2px_#999]">
      <div className="flex items-end">
        <span className="font-['Liberation_Sans',sans-serif] text-[39px] leading-[36px] font-bold">Bai</span>
        <svg width="54" height="58" viewBox="0 0 54 58" className="shrink-0">
          <g fill="#fff" stroke="#bbb" strokeWidth="0.600">
            <ellipse cx="8" cy="22" rx="6.500" ry="8.500" />
            <ellipse cx="21" cy="9.500" rx="6.500" ry="9" />
            <ellipse cx="37" cy="10.500" rx="6.500" ry="9" transform="rotate(12 37 10.500)" />
            <ellipse cx="47" cy="26" rx="6.500" ry="8.500" />
            <path d="M27 23c8 0 11 10 18 16 7 8 3 18-5 18-6 0-8-1-13-1s-8 1-13 1C5 57 1 47 8 40c7-7 10-17 19-17z" />
          </g>
          <text x="27" y="51" textAnchor="middle" fontSize="24" fontWeight="bold" fontFamily="Liberation Sans, sans-serif" fill="#aaa">
            du
          </text>
        </svg>
        <span className="text-[30px] leading-[36px] font-bold">经验</span>
      </div>
      <div className="text-[21px] leading-[28px]">jingyan.baidu.com</div>
    </div>
  );
}

export default function App() {
  return (
    <div className="h-screen overflow-hidden border-x border-t border-[#75879a] bg-[#e8edf2] px-[2px] font-['Noto_Sans','Noto_Sans_CJK_SC',sans-serif]">
      <div className="relative flex h-full flex-col border-x border-t border-[#777] border-t-[#eee] bg-[#d6d6d6]">
        <AppBar />
        <MenuBar />
        <OptionsBar />
        <div className="flex min-h-0 flex-1">
          <Toolbox />
          <Document />
          <aside className="flex w-[221px] shrink-0 flex-col">
            <DarkBar>
              <span className="flex w-[24px] justify-end">
                <Chevrons left />
              </span>
              <Chevrons />
            </DarkBar>
            <div className="flex min-h-0 flex-1">
              <IconDock />
              <div className="flex min-w-0 flex-1 flex-col">
                <ColorPanel />
                <MaskPanel />
                <LayersPanel />
              </div>
            </div>
          </aside>
        </div>
        <Watermark />
      </div>
    </div>
  );
}
